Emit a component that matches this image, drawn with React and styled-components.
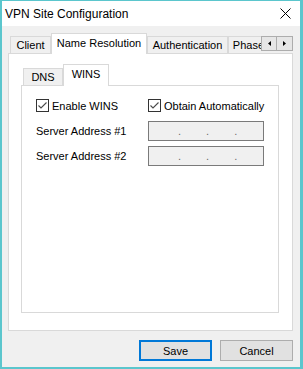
import React from "react";
import styled, { createGlobalStyle } from "styled-components";

const GlobalStyle = createGlobalStyle`
  * { box-sizing: border-box; }
  body {
    margin: 0;
    font-family: "Liberation Sans", Arial, sans-serif;
    font-size: 11px;
    color: #000;
  }
`;

export default function App() {
  return (
    <>
      <GlobalStyle />
      <Window>
        <TitleBar>
          <Title>VPN Site Configuration</Title>
          <svg width="11" height="11" viewBox="0 0 11 11">
            <path d="M0.5 0.5 L10.5 10.5 M10.5 0.5 L0.5 10.5" stroke="#000" strokeWidth="1" />
          </svg>
        </TitleBar>
        <Body>
          <TabStrip>
            <TabList>
              <Tab $w={41}>Client</Tab>
              <Tab $w={96} $active>Name Resolution</Tab>
              <Tab $w={81}>Authentication</Tab>
              <Tab $w={50}>Phase 1</Tab>
            </TabList>
            <Scroller>
              <ScrollButton>
                <svg width="3" height="5" viewBox="0 0 3 5">
                  <path d="M3 0 L0 2.5 L3 5 Z" fill="#000" />
                </svg>
              </ScrollButton>
              <ScrollButton>
                <svg width="3" height="5" viewBox="0 0 3 5">
                  <path d="M0 0 L3 2.5 L0 5 Z" fill="#000" />
                </svg>
              </ScrollButton>
            </Scroller>
          </TabStrip>
          <Panel>
            <InnerTabs>
              <InnerTab $w={40}>DNS</InnerTab>
              <InnerTab $w={46} $active>WINS</InnerTab>
            </InnerTabs>
            <InnerPanel>
              <Row>
                <CheckLabel>
                  <CheckBox />
                  Enable WINS
                </CheckLabel>
                <CheckLabel>
                  <CheckBox />
                  Obtain Automatically
                </CheckLabel>
              </Row>
              <Row $top={9}>
                <FieldLabel>Server Address #1</FieldLabel>
                <IPField />
              </Row>
              <Row $top={5}>
                <FieldLabel>Server Address #2</FieldLabel>
                <IPField />
              </Row>
            </InnerPanel>
          </Panel>
          <Footer>
            <Button $primary>Save</Button>
            <Button>Cancel</Button>
          </Footer>
        </Body>
      </Window>
    </>
  );
}

function CheckBox() {
  return (
    <Box>
      <svg width="11" height="11" viewBox="0 0 11 11">
        <path d="M1.5 5.5 L4 8 L9.5 2.5" stroke="#4a4a4a" strokeWidth="1.1" fill="none" />
      </svg>
    </Box>
  );
}

function IPField() {
  return (
    <IPBox>
      <Dot>.</Dot>
      <Dot>.</Dot>
      <Dot>.</Dot>
    </IPBox>
  );
}

const Window = styled.div`
  width: 303px;
  height: 369px;
  display: flex;
  flex-direction: column;
  border: solid #5bc6cd;
  border-width: 1px 3px 2px 2px;
  background: #f0f0f0;
`;

const TitleBar = styled.div`
  height: 25px;
  background: #fff;
  display: flex;
  align-items: center;
  justify-content: space-between;
  padding: 0 9px 0 3px;
`;

const Title = styled.span`
  font-size: 12px;
`;

const Body = styled.div`
  flex: 1;
  display: flex;
  flex-direction: column;
  padding: 7px 7px 6px 6px;
`;

const TabStrip = styled.div`
  height: 20px;
  display: flex;
  align-items: flex-start;
  padding-left: 2px;
`;

const TabList = styled.div`
  flex: 1;
  min-width: 0;
  height: 100%;
  display: flex;
  align-items: flex-end;
  overflow-x: clip;
  overflow-y: visible;
`;

const Tab = styled.div`
  flex: none;
  width: ${(p) => p.$w}px;
  height: ${(p) => (p.$active ? 21 : 17)}px;
  margin-bottom: ${(p) => (p.$active ? -1 : 0)}px;
  padding-bottom: ${(p) => (p.$active ? 3 : 0)}px;
  background: ${(p) => (p.$active ? "#fff" : "#f0f0f0")};
  border: 1px solid #d9d9d9;
  border-bottom: none;
  display: flex;
  align-items: center;
  justify-content: center;
  white-space: nowrap;
  position: relative;
  z-index: ${(p) => (p.$active ? 1 : 0)};
`;

const Scroller = styled.div`
  display: flex;
  flex: none;
  margin-top: 3px;
`;

const ScrollButton = styled.div`
  width: 16px;
  height: 15px;
  background: #e6e6e6;
  border: 1px solid #adadad;
  display: flex;
  align-items: center;
  justify-content: center;
  & + & {
    border-left: none;
  }
`;

const Panel = styled.div`
  flex: 1;
  display: flex;
  flex-direction: column;
  background: #fff;
  border: 1px solid #d9d9d9;
  padding: 10px 13px 17px 12px;
`;

const InnerTabs = styled.div`
  height: 21px;
  display: flex;
  align-items: flex-end;
  padding-left: 2px;
`;

const InnerTab = styled.div`
  width: ${(p) => p.$w}px;
  height: ${(p) => (p.$active ? 22 : 17)}px;
  margin-bottom: ${(p) => (p.$active ? -1 : 0)}px;
  padding-bottom: ${(p) => (p.$active ? 4 : 0)}px;
  background: ${(p) => (p.$active ? "#fff" : "#f0f0f0")};
  border: 1px solid #d9d9d9;
  border-bottom: none;
  display: flex;
  align-items: center;
  justify-content: center;
  position: relative;
  z-index: ${(p) => (p.$active ? 1 : 0)};
`;

const InnerPanel = styled.div`
  flex: 1;
  border: 1px solid #d9d9d9;
  padding: 13px 14px;
`;

const Row = styled.div`
  display: grid;
  grid-template-columns: 112px 116px;
  align-items: center;
  margin-top: ${(p) => p.$top || 0}px;
`;

const CheckLabel = styled.label`
  display: flex;
  align-items: center;
  gap: 3px;
  height: 13px;
  white-space: nowrap;
`;

const Box = styled.span`
  width: 13px;
  height: 13px;
  border: 1px solid #333;
  background: #fff;
  display: flex;
`;

const FieldLabel = styled.span`
  white-space: nowrap;
`;

const IPBox = styled.div`
  height: 20px;
  border: 1px solid #7a7a7a;
  background: #f0f0f0;
  display: flex;
  align-items: center;
  gap: 25px;
  padding-left: 29px;
  color: #6d6d6d;
`;

const Dot = styled.span`
  line-height: 18px;
`;

const Footer = styled.div`
  display: flex;
  justify-content: flex-end;
  gap: 8px;
  margin-top: 9px;
`;

const Button = styled.div`
  width: 73px;
  height: 21px;
  background: #e1e1e1;
  border: ${(p) => (p.$primary ? "2px solid #0078d7" : "1px solid #adadad")};
  display: flex;
  align-items: center;
  justify-content: center;
`;
